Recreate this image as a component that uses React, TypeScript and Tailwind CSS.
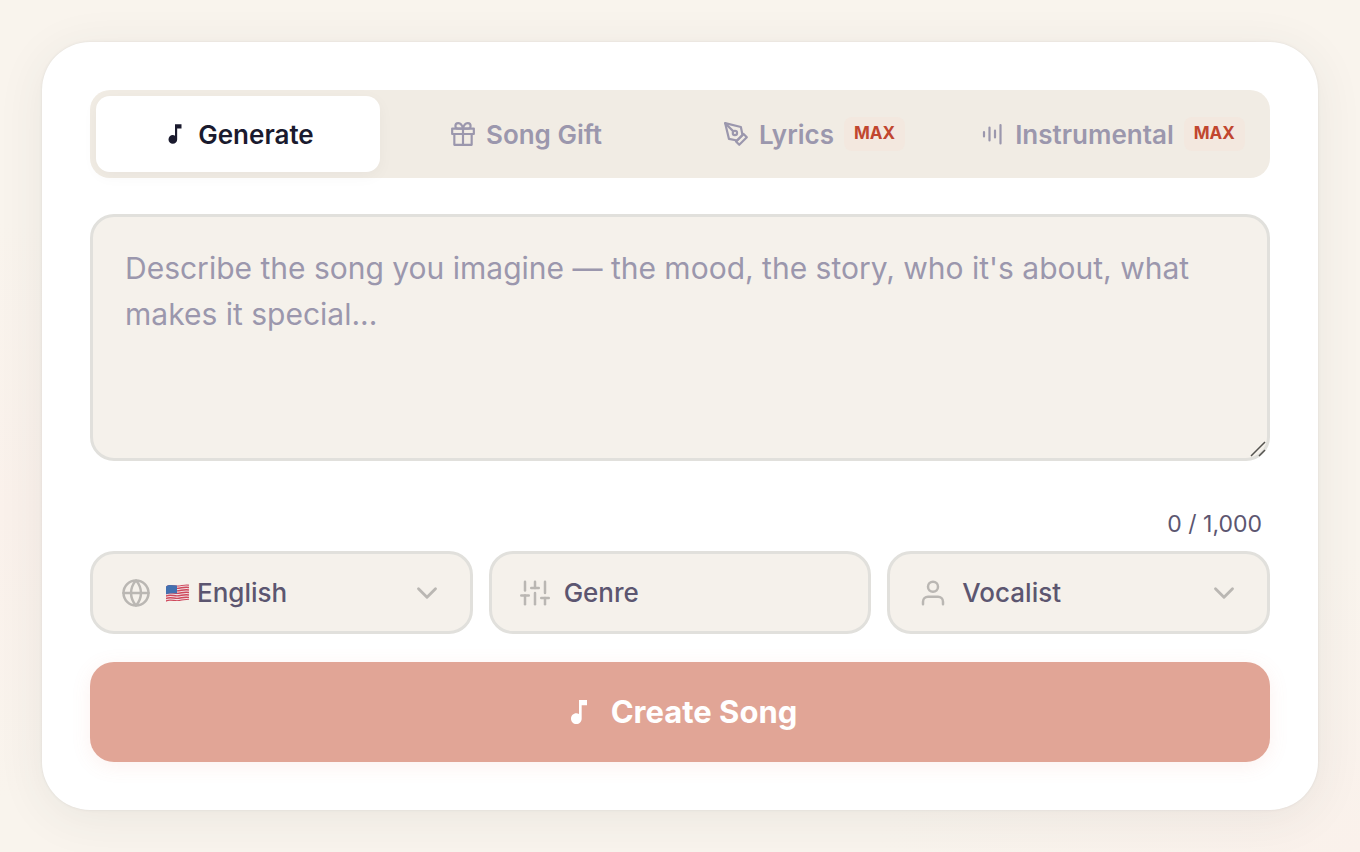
import { useState, type ReactNode } from 'react';
import { FiChevronDown, FiGift, FiGlobe, FiPenTool, FiSliders, FiUser } from 'react-icons/fi';
import { MdMusicNote } from 'react-icons/md';

function WaveIcon() {
  return (
    <svg width="26" height="26" viewBox="0 0 26 26" fill="none" stroke="currentColor" strokeWidth="2.200" strokeLinecap="round">
      <path d="M5 11v4.500M10.500 6.500v13M16 9.500v7M21.500 4v18.500" />
    </svg>
  );
}

function UsFlag() {
  return (
    <svg width="24" height="20" viewBox="0 0 24 20" className="shrink-0" aria-hidden="true">
      <defs>
        <clipPath id="flag-wave">
          <path d="M1 3.500C4 1 8 2.500 12 2.500S19 1 24 1.500V17C19 16.500 16 18 12 18s-8-1.200-11 1z" />
        </clipPath>
      </defs>
      <g clipPath="url(#flag-wave)">
        <rect width="24" height="20" fill="#f0e2e6" />
        <path
          d="M0 3.500C4 1 8 2.800 12 2.800S19 1 24 2M0 6C4 3.500 8 5.300 12 5.300S19 3.500 24 4.500M0 8.500C4 6 8 7.800 12 7.800S19 6 24 7M0 11c4-2.500 8-.7 12-.7s7-1.800 12-.8M0 13.500c4-2.500 8-.7 12-.7s7-1.800 12-.8M0 16c4-2.500 8-.7 12-.7s7-1.800 12-.8M0 18.500c4-2.500 8-.7 12-.7s7-1.800 12-.8"
          fill="none"
          stroke="#cf4a5c"
          strokeWidth="1.300"
        />
        <path d="M0 0h12v10.500c-4-.6-8-.4-12 1z" fill="#4270b0" />
      </g>
    </svg>
  );
}

const tabs: { id: string; label: string; icon: ReactNode; max?: boolean }[] = [
  { id: 'generate', label: 'Generate', icon: <MdMusicNote size={26} /> },
  { id: 'gift', label: 'Song Gift', icon: <FiGift size={26} /> },
  { id: 'lyrics', label: 'Lyrics', icon: <FiPenTool size={26} />, max: true },
  { id: 'instrumental', label: 'Instrumental', icon: <WaveIcon />, max: true },
];

function ModeTabs() {
  const [active, setActive] = useState('generate');

  return (
    <div role="tablist" className="flex gap-1 rounded-[20px] bg-[#f1ece4] p-1.5">
      {tabs.map((tab) => (
        <button
          key={tab.id}
          type="button"
          role="tab"
          aria-selected={active === tab.id}
          onClick={() => setActive(tab.id)}
          className={`flex h-[76px] cursor-pointer items-center justify-center gap-2.5 rounded-[14px] text-[26px] font-semibold whitespace-nowrap last:w-[304px] not-last:flex-1 ${
            active === tab.id ? 'bg-white text-[#1a1a2e] shadow-[0_4px_16px_rgba(26,26,46,0.04)]' : 'text-[#9b97ad]'
          }`}
        >
          {tab.icon}
          {tab.label}
          {tab.max && (
            <span className="flex h-[34px] items-center rounded-lg bg-[#f3e8df] px-2.5 text-[17px] font-bold text-[#c1462f]">MAX</span>
          )}
        </button>
      ))}
    </div>
  );
}

const fieldClass =
  'flex h-[83px] items-center gap-3.5 rounded-3xl border-3 border-[#e1e0dc] bg-[#f5f1eb] pr-[26px] pl-7 text-[26px] font-medium text-[#5c5670]';

function SelectField({ label, icon, flag, options }: { label: string; icon: ReactNode; flag?: ReactNode; options: string[] }) {
  return (
    <label className={fieldClass}>
      <span className="shrink-0 text-[#bab7b3]">{icon}</span>
      <span className="flex min-w-0 flex-1 items-center gap-2">
        {flag}
        <select aria-label={label} className="min-w-0 flex-1 cursor-pointer appearance-none bg-transparent outline-none">
          {options.map((option) => (
            <option key={option}>{option}</option>
          ))}
        </select>
      </span>
      <FiChevronDown size={34} className="shrink-0 text-[#bab7b3]" />
    </label>
  );
}

export default function App() {
  const [prompt, setPrompt] = useState('');

  return (
    <main className="min-h-screen bg-[#f9f4ed] bg-[radial-gradient(ellipse_at_0%_60%,#faf1eb,transparent_40%),radial-gradient(ellipse_at_100%_100%,#faf1eb,transparent_25%)] p-[42px] font-[Inter,'Liberation_Sans',sans-serif]">
      <form
        onSubmit={(e) => e.preventDefault()}
        className="rounded-[48px] bg-white p-12 shadow-[0_0_3px_rgba(60,80,90,0.1),0_8px_48px_rgba(50,60,60,0.08)]"
      >
        <ModeTabs />

        <div className="relative mt-9">
          <textarea
            aria-label="Song description"
            maxLength={1000}
            value={prompt}
            onChange={(e) => setPrompt(e.target.value)}
            placeholder="Describe the song you imagine — the mood, the story, who it's about, what makes it special..."
            className="block h-[247px] w-full resize-none rounded-3xl border-3 border-[#e1e0dc] bg-[#f5f1eb] px-8 py-7 text-[30px] leading-[46px] text-[#5c5670] outline-none placeholder:text-[#9b97ad]"
          />
          <svg width="18" height="18" viewBox="0 0 18 18" className="pointer-events-none absolute right-[3px] bottom-[3px]" stroke="#55534f" strokeWidth="1.500">
            <path d="M2 16L16 2M10 16l6-6" />
          </svg>
        </div>

        <p className="mt-12 pr-2 text-right text-[23px] leading-[30px] text-[#5c5670]">{prompt.length} / 1,000</p>

        <div className="mt-3 grid grid-cols-3 gap-4">
          <SelectField
            label="Language"
            icon={<FiGlobe size={30} />}
            flag={<UsFlag />}
            options={['English', 'Spanish', 'French', 'German']}
          />
          <button type="button" className={fieldClass}>
            <FiSliders size={30} className="shrink-0 text-[#bab7b3]" />
            Genre
          </button>
          <SelectField label="Vocalist" icon={<FiUser size={30} />} options={['Vocalist', 'Female', 'Male']} />
        </div>

        <button
          type="submit"
          className="mt-7 flex h-[100px] w-full cursor-pointer items-center justify-center gap-4 rounded-3xl bg-[#e1a596] text-[31px] font-bold text-white shadow-[0_4px_20px_rgba(226,120,100,0.1)]"
        >
          <MdMusicNote size={32} />
          Create Song
        </button>
      </form>
    </main>
  );
}
